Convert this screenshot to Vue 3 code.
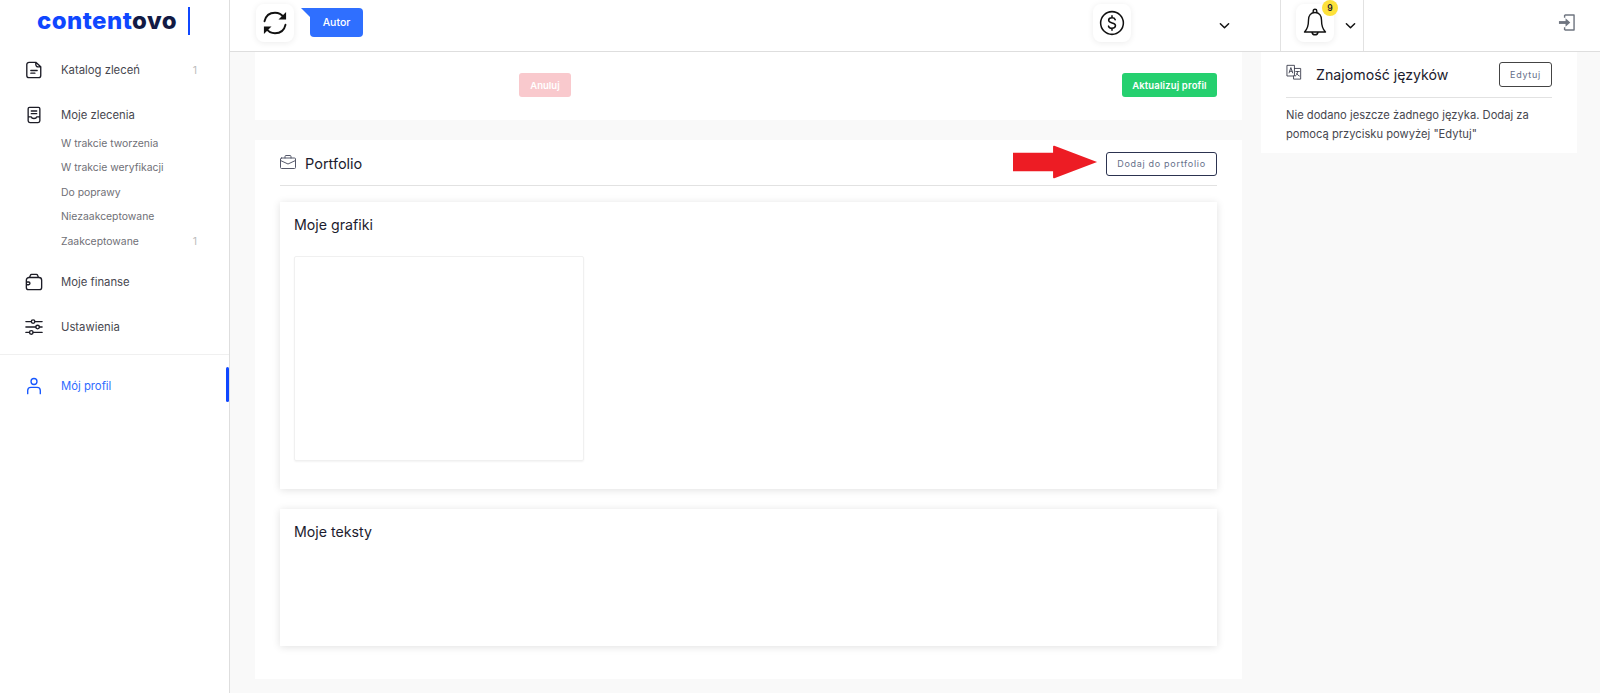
<template>
  <div class="app">
    <aside class="sidebar">
      <div class="logo">
        <span class="logo-text"><b>content</b><i>ovo</i></span>
        <span class="logo-bar"></span>
      </div>

      <nav class="nav">
        <a class="item first">
          <svg class="icon" viewBox="0 0 20 20"><path d="M4.500 1.500h7.500l5.500 5v9.500a2.500 2.500 0 0 1-2.500 2.500H4.500A2.500 2.500 0 0 1 2 16V4a2.500 2.500 0 0 1 2.500-2.500zM12 1.500V4a2.500 2.500 0 0 0 2.500 2.500h3M6.500 10.500h7M6.500 13.500h4.500"/></svg>
          <span class="label">Katalog zleceń</span>
          <span class="count">1</span>
        </a>

        <a class="item group">
          <svg class="icon" viewBox="0 0 20 20"><path d="M5 1.500h10a1.500 1.500 0 0 1 1.500 1.500v13.500a2 2 0 0 1-2 2h-9a2 2 0 0 1-2-2V3A1.500 1.500 0 0 1 5 1.500zM3.500 12H7c.5 2.500 5.500 2.500 6 0h3.500M7 5.500h6M7 8.500h6"/></svg>
          <span class="label">Moje zlecenia</span>
        </a>
        <ul class="sub">
          <li v-for="s in subItems" :key="s.name">
            <span>{{ s.name }}</span>
            <span v-if="s.count" class="count">{{ s.count }}</span>
          </li>
        </ul>

        <a class="item finance">
          <svg class="icon" viewBox="0 0 20 20"><path d="M4.500 5h11a3 3 0 0 1 3 3v8a2.500 2.500 0 0 1-2.500 2.500H4A2.500 2.500 0 0 1 1.500 16V8a3 3 0 0 1 3-3zM5 5l1-2.500a1.500 1.500 0 0 1 1.500-1h5a1.500 1.500 0 0 1 1.500 1L15 5M1.500 10H4a1.500 1.500 0 0 1 0 3H1.500"/></svg>
          <span class="label">Moje finanse</span>
        </a>
        <a class="item settings">
          <svg class="icon" viewBox="0 0 20 20"><path d="M1 4h6M11 4h8M1 10h11M16 10h3M1 16h4M9 16h10"/><circle cx="9" cy="4" r="2"/><circle cx="14" cy="10" r="2"/><circle cx="7" cy="16" r="2"/></svg>
          <span class="label">Ustawienia</span>
        </a>
      </nav>

      <a class="item profile">
        <svg class="icon" viewBox="0 0 20 20"><circle cx="10" cy="5" r="3.300"/><path d="M3 18.500V15a3.500 3.500 0 0 1 3.500-3.500h7A3.500 3.500 0 0 1 17 15v3.500"/></svg>
        <span class="label">Mój profil</span>
        <span class="active-bar"></span>
      </a>
    </aside>

    <div class="right">
      <header class="topbar">
        <div class="tile">
          <svg class="tile-icon refresh" viewBox="0 0 24 24"><path d="M3 10.500C4 6 7.500 3.200 12 3.200c3 0 5.700 1.300 7.300 3.800M21 13.500c-1 4.500-4.500 7.300-9 7.300-3 0-5.700-1.300-7.300-3.800"/><path class="solid" d="M21.500 2.500v6.500h-6.500zM2.500 21.500V15H9z"/></svg>
        </div>
        <div class="role">Autor</div>

        <div class="balance">
          <div class="tile">
            <svg class="tile-icon" viewBox="0 0 24 24"><circle cx="12" cy="12" r="10.500"/><path d="M15 9c-.4-1.200-1.600-1.800-3-1.800-1.800 0-3.100.9-3.100 2.300 0 3.300 6.300 1.600 6.300 4.900 0 1.500-1.400 2.400-3.200 2.400-1.500 0-2.800-.7-3.200-1.900M12 5.300v1.900M12 17v1.700"/></svg>
          </div>
          <svg class="chev" viewBox="0 0 12 8"><path d="M1.500 1.500 6 6l4.500-4.500"/></svg>
        </div>

        <div class="notify">
          <div class="tile">
            <svg class="tile-icon bell" viewBox="0 0 24 30"><path d="M12 4.500c-4.300 0-6.500 3.300-6.500 7.500 0 6-1.300 9.500-4 12h21c-2.700-2.500-4-6-4-12 0-4.200-2.200-7.500-6.500-7.500zM10.200 4.800V3a1.800 1.800 0 0 1 3.600 0v1.800M9 24.500a3.100 3.100 0 0 0 6 0"/></svg>
            <span class="badge">9</span>
          </div>
          <svg class="chev" viewBox="0 0 12 8"><path d="M1.500 1.500 6 6l4.500-4.500"/></svg>
        </div>

        <div class="logout">
          <svg viewBox="0 0 18 18"><path class="exit-frame" d="M7 1h10v16H7M7 1v3M7 14v3"/><path class="exit-arrow" d="M1 9h9"/><path class="exit-head" d="M8 4.500 13 9l-5 4.500z"/></svg>
        </div>
      </header>

      <main class="content">
        <div class="col-left">
          <section class="card actions">
            <button class="btn cancel">Anuluj</button>
            <button class="btn save">Aktualizuj profil</button>
          </section>

          <section class="card portfolio">
            <div class="card-head">
              <svg class="head-icon" viewBox="0 0 16 14"><path d="M1.500 3h13a1 1 0 0 1 1 1v8.500a1 1 0 0 1-1 1h-13a1 1 0 0 1-1-1V4a1 1 0 0 1 1-1zM5 3V1.500a1 1 0 0 1 1-1h4a1 1 0 0 1 1 1V3M.5 5.500 8 9l7.500-3.500"/></svg>
              <h2>Portfolio</h2>
              <button class="btn outline add">Dodaj do portfolio</button>
            </div>

            <div class="panel graphics">
              <h3>Moje grafiki</h3>
              <div class="thumb"></div>
            </div>
            <div class="panel texts">
              <h3>Moje teksty</h3>
            </div>
          </section>
        </div>

        <div class="col-right">
          <section class="card languages">
            <div class="card-head lang-head">
              <svg class="head-icon lang-icon" viewBox="0 0 18 18"><path d="M1.500 1.500h8v12h-8zM9.500 5h7v12h-8v-3.500"/><path class="thin" d="M3.500 10 5.500 4l2 6M4.200 8.200h2.600M11 8.500h4M13 8.500c0 2.500-1 4-2.500 5M12 11c.7 1 1.800 2 3 2.500"/></svg>
              <h2>Znajomość języków</h2>
              <button class="btn outline edit">Edytuj</button>
            </div>
            <p>Nie dodano jeszcze żadnego języka. Dodaj za pomocą przycisku powyżej "Edytuj"</p>
          </section>
        </div>
      </main>
    </div>

    <!-- czerwona strzalka z adnotacji na zrzucie -->
    <svg class="arrow" viewBox="0 0 90 36"><path d="M1 8.500h41V2.500a1 1 0 0 1 1.300-1L87 18 43.300 34.500a1 1 0 0 1-1.300-1V27.500H1z"/></svg>
  </div>
</template>

<script setup>
const subItems = [
  { name: 'W trakcie tworzenia' },
  { name: 'W trakcie weryfikacji' },
  { name: 'Do poprawy' },
  { name: 'Niezaakceptowane' },
  { name: 'Zaakceptowane', count: 1 }
]
</script>

<style>
html, body {
  margin: 0;
  background: #f9f9f9;
}
</style>

<style scoped>
.app {
  position: relative;
  display: flex;
  width: 1600px;
  height: 693px;
  overflow: hidden;
  background: #f9f9f9;
  font-family: "Inter", "Liberation Sans", sans-serif;
  color: #1c1c2e;
}

.sidebar {
  width: 229px;
  flex-shrink: 0;
  background: #fff;
  border-right: 1px solid #dedede;
}

.logo {
  height: 42px;
  display: flex;
  align-items: center;
  gap: 11px;
  margin-left: 37px;
}

.logo-text {
  font-size: 24px;
  line-height: 42px;
  font-weight: 800;
  letter-spacing: 0.45px;
}

.logo-text b {
  color: #0f47ff;
  font-weight: 800;
}

.logo-text i {
  color: #121a44;
  font-style: normal;
}

.logo-bar {
  width: 2px;
  height: 28px;
  background: #0f47ff;
}

.item {
  display: flex;
  align-items: center;
  height: 24px;
  padding-left: 25px;
  padding-right: 32px;
  font-size: 11.300px;
  color: #47474f;
}

.icon {
  width: 18px;
  height: 18px;
  margin-right: 18px;
  fill: none;
  stroke: #1c1c26;
  stroke-width: 1.500;
  stroke-linecap: round;
  stroke-linejoin: round;
}

.label {
  flex: 1;
}

.count {
  font-size: 10.500px;
  color: #bcbcbc;
}

.first { margin-top: 16px; }
.group { margin-top: 21px; }

.sub {
  list-style: none;
  margin: 4px 0 0;
  padding: 0 32px 0 61px;
  font-size: 10.400px;
  color: #6f6f76;
}

.sub li {
  display: flex;
  justify-content: space-between;
  align-items: center;
  height: 24.500px;
}

.finance { margin-top: 16px; }
.settings { margin-top: 21px; }

.nav {
  padding-bottom: 15px;
}

.profile {
  position: relative;
  height: 62px;
  color: #2f6bff;
  border-top: 1px solid #f0f0f0;
}

.profile .icon { stroke: #1557ff; }

.active-bar {
  position: absolute;
  right: 0;
  top: 12px;
  width: 3px;
  height: 35px;
  background: #0f47ff;
  border-radius: 2px;
}

.right {
  flex: 1;
  min-width: 0;
  display: flex;
  flex-direction: column;
}

.topbar {
  height: 51px;
  flex-shrink: 0;
  display: flex;
  align-items: center;
  padding-left: 26px;
  background: #fff;
  border-bottom: 1px solid #dedede;
}

.tile {
  position: relative;
  width: 38px;
  height: 38px;
  border-radius: 8px;
  background: #fff;
  box-shadow: 0 1px 6px rgba(0, 0, 0, 0.08);
  display: flex;
  align-items: center;
  justify-content: center;
  margin-bottom: 6px;
}

.tile-icon {
  width: 26px;
  height: 26px;
  fill: none;
  stroke: #111;
  stroke-width: 1.400;
  stroke-linecap: round;
  stroke-linejoin: round;
}

.tile-icon .solid {
  fill: #111;
  stroke: none;
}

.tile-icon.refresh {
  width: 28px;
  height: 28px;
  stroke-width: 1.600;
}

.tile-icon.bell {
  width: 24px;
  height: 30px;
}

.role {
  position: relative;
  margin-left: 16px;
  margin-bottom: 6px;
  width: 53px;
  height: 29px;
  line-height: 29px;
  text-align: center;
  font-size: 10.500px;
  font-weight: 500;
  color: #fff;
  background: #2f6fff;
  border-radius: 0 4px 4px 4px;
}

.role::before {
  content: "";
  position: absolute;
  left: -9px;
  top: 0;
  border-top: 9px solid #2f6fff;
  border-left: 9px solid transparent;
  width: 0;
  height: 0;
}

.balance {
  display: flex;
  align-items: center;
  margin-left: 730px;
  width: 187px;
  height: 100%;
}

.balance .chev {
  margin-left: 88px;
}

.chev {
  width: 11px;
  height: 8px;
  fill: none;
  stroke: #111;
  stroke-width: 1.600;
  stroke-linecap: round;
  stroke-linejoin: round;
}

.notify {
  display: flex;
  align-items: center;
  width: 84px;
  height: 100%;
  box-sizing: border-box;
  padding-left: 15px;
  border-left: 1px solid #e2e2e2;
  border-right: 1px solid #e2e2e2;
}

.notify .chev {
  margin-left: 11px;
}

.badge {
  position: absolute;
  right: -4px;
  top: -4px;
  width: 16px;
  height: 16px;
  border-radius: 50%;
  background: #fde13a;
  font-size: 8.500px;
  line-height: 16px;
  text-align: center;
  font-weight: 600;
}

.logout {
  margin-left: auto;
  margin-right: 25px;
  margin-bottom: 6px;
  display: flex;
}

.logout svg {
  width: 17px;
  height: 17px;
  fill: none;
  stroke-linejoin: round;
}

.exit-frame {
  stroke: #6f7580;
  stroke-width: 1.500;
}

.exit-arrow {
  stroke: #6f7580;
  stroke-width: 3;
}

.exit-head {
  fill: #6f7580;
}

.content {
  flex: 1;
  display: flex;
  gap: 20px;
  padding-left: 25px;
}

.col-left {
  width: 987px;
  display: flex;
  flex-direction: column;
  gap: 20px;
}

.col-right {
  width: 316px;
  margin-left: -1px;
}

.card {
  background: #fff;
  box-sizing: border-box;
}

.actions {
  height: 68px;
  display: flex;
  justify-content: space-between;
  align-items: flex-start;
  padding: 21px 25px 0 264px;
}

.btn {
  font-family: inherit;
  border-radius: 3px;
  cursor: pointer;
}

.cancel {
  width: 52px;
  height: 24px;
  border: none;
  background: #f9c9cd;
  color: #fff;
  font-size: 9.500px;
  font-weight: 600;
  padding: 0;
}

.save {
  width: 95px;
  height: 24px;
  border: none;
  background: #25d06f;
  color: #fff;
  font-size: 9.500px;
  font-weight: 600;
  letter-spacing: 0.15px;
  padding: 0;
}

.outline {
  background: #fff;
  border: 1px solid #2c3350;
  color: #66708a;
  font-size: 9px;
  letter-spacing: 0.7px;
  padding: 0;
}

.portfolio {
  padding: 0 25px;
  height: 539px;
}

.card-head {
  display: flex;
  align-items: center;
  border-bottom: 1px solid #e2e2e2;
}

.portfolio .card-head {
  height: 43px;
  padding-top: 2px;
}

.card-head h2 {
  margin: 0;
  font-weight: 400;
  font-size: 14.500px;
  color: #1c1c2e;
}

.head-icon {
  width: 16px;
  height: 14px;
  margin-right: 9px;
  margin-bottom: 4px;
  fill: none;
  stroke: #55586a;
  stroke-width: 1;
  stroke-linecap: round;
  stroke-linejoin: round;
}

.add {
  margin-left: auto;
  width: 111px;
  height: 24px;
}

.panel {
  background: #fff;
  padding: 14px;
  box-sizing: border-box;
  box-shadow: 0 1px 8px rgba(0, 0, 0, 0.12);
}

.panel h3 {
  margin: 0;
  font-weight: 400;
  font-size: 14.200px;
  line-height: 18px;
  color: #1c1c2e;
}

.graphics {
  margin-top: 16px;
  height: 287px;
}

.thumb {
  width: 290px;
  height: 205px;
  margin-top: 22px;
  box-sizing: border-box;
  border: 1px solid #f0f0f0;
  border-radius: 2px;
  box-shadow: 0 1px 2px rgba(0, 0, 0, 0.05);
}

.texts {
  margin-top: 20px;
  height: 137px;
}

.languages {
  height: 101px;
  padding: 0 25px;
}

.lang-head {
  height: 45px;
}

.lang-head h2 {
  font-size: 14.200px;
}

.lang-icon {
  width: 16px;
  height: 16px;
  margin-right: 14px;
  margin-bottom: 6px;
  stroke: #3a3c4c;
}

.edit {
  margin-left: auto;
  width: 53px;
  height: 25px;
  margin-bottom: 1px;
  border-color: #444;
}

.languages p {
  margin: 8px 0 0;
  font-size: 11.200px;
  line-height: 18.500px;
  color: #47474f;
}

.arrow {
  position: absolute;
  left: 1012px;
  top: 144px;
  width: 88px;
  height: 36px;
  fill: #ed1c24;
}
</style>
